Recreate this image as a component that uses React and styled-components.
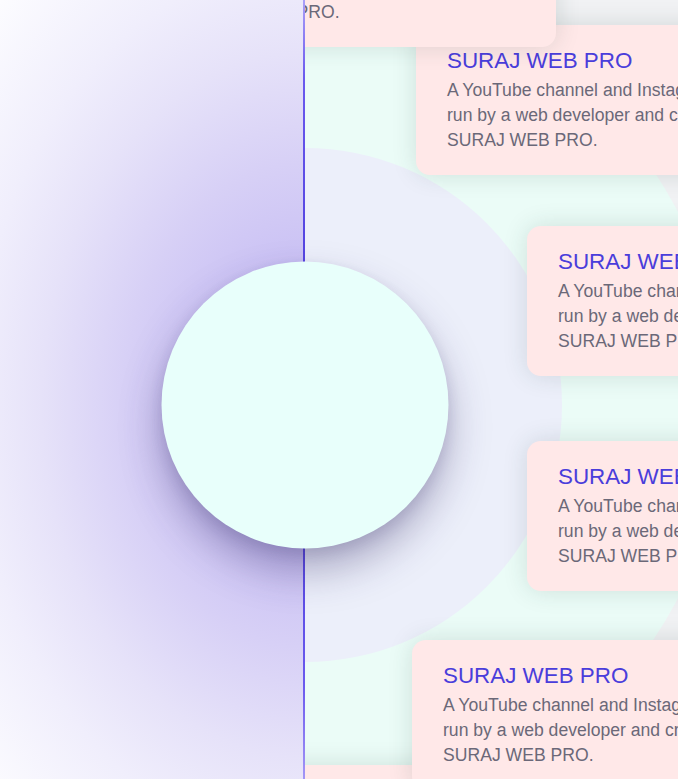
import React from "react";
import styled, { createGlobalStyle } from "styled-components";

const GlobalStyle = createGlobalStyle`
  * {
    box-sizing: border-box;
  }
  body {
    margin: 0;
    font-family: "Liberation Sans", Arial, sans-serif;
    background: #f1f2f4;
  }
`;

const Page = styled.div`
  position: relative;
  display: flex;
  width: 100%;
  height: 100vh;
  overflow: hidden;
`;

const SidePanel = styled.div`
  position: relative;
  z-index: 2;
  flex: 0 0 305px;
  background: radial-gradient(
    ellipse 330px 440px at 100% 52%,
    #bdb2f1 0%,
    #c9c0f4 30%,
    #d7d0f6 55%,
    #e6e2f9 80%,
    #f0eefc 100%,
    #fcfcff 130%
  );
  &::after {
    content: "";
    position: absolute;
    top: 0;
    right: 0;
    width: 2px;
    height: 100%;
    background: linear-gradient(
      to bottom,
      #ab9ff8 0%,
      #6a5aee 10%,
      #5646e2 30%,
      #5646e2 70%,
      #6a5aee 88%,
      #a396f6 100%
    );
  }
`;

const Stage = styled.div`
  position: relative;
  flex: 1;
  overflow: hidden;
  background: #f1f2f4;
`;

const Ring = styled.div`
  position: absolute;
  left: 0;
  top: 405px;
  width: ${(p) => p.$size}px;
  height: ${(p) => p.$size}px;
  border-radius: 50%;
  background: ${(p) => p.$color};
  transform: translate(-50%, -50%);
`;

const Hub = styled.div`
  position: absolute;
  z-index: 5;
  left: 305px;
  top: 405px;
  width: 287px;
  height: 287px;
  border-radius: 50%;
  background: #e8fffb;
  transform: translate(-50%, -50%);
  box-shadow: 0 22px 40px rgba(50, 40, 100, 0.35), 0 6px 14px rgba(50, 40, 100, 0.12);
`;

const Card = styled.div`
  position: absolute;
  left: ${(p) => p.$x}px;
  top: ${(p) => p.$y}px;
  z-index: ${(p) => p.$z};
  width: 398px;
  padding: 23px 31px 22px;
  background: #ffe8e8;
  border-radius: 14px;
  box-shadow: 0 0 24px rgba(40, 70, 60, 0.15);
`;

const Title = styled.h3`
  margin: 0 0 5px;
  font-size: 22.4px;
  line-height: 25px;
  font-weight: 400;
  color: #4a3ddb;
`;

const Text = styled.p`
  margin: 0;
  font-size: 17.6px;
  line-height: 25px;
  color: #6b6878;
`;

const cards = [
  { x: -147, y: -103, z: 3 },
  { x: 111, y: 25, z: 2 },
  { x: 222, y: 226, z: 2 },
  { x: 222, y: 441, z: 2 },
  { x: 107, y: 640, z: 3 },
  { x: -147, y: 765, z: 2 },
];

export default function App() {
  return (
    <>
      <GlobalStyle />
      <Page>
        <SidePanel />
        <Stage>
          <Ring $size={840} $color="#ebfcf7" />
          <Ring $size={514} $color="#eceffa" />
          {cards.map((c, i) => (
            <Card key={i} $x={c.x} $y={c.y} $z={c.z}>
              <Title>SURAJ WEB PRO</Title>
              <Text>
                A YouTube channel and Instagram page run by a web developer and creator SURAJ WEB PRO.
              </Text>
            </Card>
          ))}
        </Stage>
        <Hub />
      </Page>
    </>
  );
}
